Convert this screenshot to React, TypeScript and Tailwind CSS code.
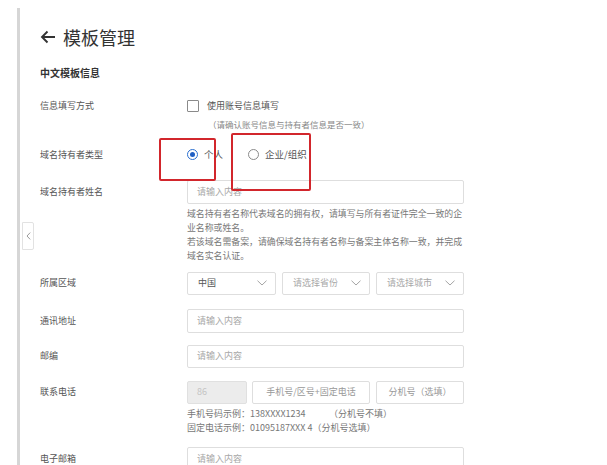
import React from "react";

function Chevron() {
  return (
    <svg width="10" height="6" viewBox="0 0 10 6" fill="none" className="shrink-0">
      <path d="M0.5 0.7 L5 5 L9.5 0.7" stroke="#9a9a9a" strokeWidth="0.9" />
    </svg>
  );
}

function Field({ placeholder, className = "" }: { placeholder: string; className?: string }) {
  return (
    <div className={`border border-[#dedede] rounded-[2px] flex items-center px-[9px] text-[9px] text-[#a8a8a8] ${className}`}>
      {placeholder}
    </div>
  );
}

function Select({ value, muted, className = "" }: { value: string; muted?: boolean; className?: string }) {
  return (
    <div className={`border border-[#dedede] rounded-[2px] flex items-center justify-between pl-[10px] pr-[8px] text-[9px] ${muted ? "text-[#a8a8a8]" : "text-[#555]"} ${className}`}>
      <span>{value}</span>
      <Chevron />
    </div>
  );
}

function Row({ label, children, className = "" }: { label: string; children: React.ReactNode; className?: string }) {
  return (
    <div className={`flex items-center ${className}`}>
      <div className="w-[147px] shrink-0 text-[9px] text-[#555]">{label}</div>
      {children}
    </div>
  );
}

export default function App() {
  return (
    <div
      className="relative w-[607px] h-[465px] overflow-hidden bg-white flex"
      style={{ fontFamily: '"Noto Sans CJK SC", "Noto Sans", sans-serif' }}
    >
      <div className="w-[17px] shrink-0" />
      <div className="w-[3px] shrink-0 mt-[8px] bg-[#d6d6d6]" />
      <div className="flex flex-col pl-[20px]">
        <div className="mt-[25px] h-[24px] flex items-center gap-[7px] text-[18px] leading-[24px] text-[#333]">
          <svg width="16" height="14" viewBox="0 0 16 14" fill="none">
            <path d="M15 7 H2 M7.5 1.5 L2 7 L7.5 12.5" stroke="#333" strokeWidth="1.9" />
          </svg>
          <span>模板管理</span>
        </div>

        <div className="mt-[17px] h-[14px] leading-[14px] text-[10px] font-bold text-[#333]">中文模板信息</div>

        <Row label="信息填写方式" className="mt-[19px] h-[14px]">
          <div className="flex items-center gap-[8px]">
            <div className="w-[12px] h-[12px] border border-[#8a8a8a] rounded-[1px] bg-white" />
            <span className="text-[9px] text-[#555]">使用账号信息填写</span>
          </div>
        </Row>
        <div className="mt-[5px] h-[12px] leading-[12px] pl-[168px] text-[8.5px] text-[#888]">
          （请确认账号信息与持有者信息是否一致）
        </div>

        <Row label="域名持有者类型" className="mt-[18px] h-[14px]">
          <div className="flex items-center text-[9.5px] text-[#555]">
            <div className="w-[11px] h-[11px] rounded-full border border-[#2b6fd0] flex items-center justify-center">
              <div className="w-[5px] h-[5px] rounded-full bg-[#1f5fc4]" />
            </div>
            <span className="ml-[6px]">个人</span>
            <div className="ml-[25px] w-[11px] h-[11px] rounded-full border border-[#8a8a8a]" />
            <span className="ml-[6px]">企业/组织</span>
          </div>
        </Row>

        <Row label="域名持有者姓名" className="mt-[18px]">
          <Field placeholder="请输入内容" className="w-[277px] h-[24px]" />
        </Row>
        <div className="mt-[3px] pl-[147px] w-[426px] text-[8.9px] leading-[14px] text-[#777]">
          <p>域名持有者名称代表域名的拥有权，请填写与所有者证件完全一致的企业名称或姓名。</p>
          <p>若该域名需备案，请确保域名持有者名称与备案主体名称一致，并完成域名实名认证。</p>
        </div>

        <Row label="所属区域" className="mt-[9px]">
          <div className="flex gap-[6px]">
            <Select value="中国" className="w-[89px] h-[23px]" />
            <Select value="请选择省份" muted className="w-[88px] h-[23px]" />
            <Select value="请选择城市" muted className="w-[88px] h-[23px]" />
          </div>
        </Row>

        <Row label="通讯地址" className="mt-[14px]">
          <Field placeholder="请输入内容" className="w-[277px] h-[24px]" />
        </Row>

        <Row label="邮编" className="mt-[12px]">
          <Field placeholder="请输入内容" className="w-[277px] h-[23px]" />
        </Row>

        <Row label="联系电话" className="mt-[13px]">
          <div className="flex">
            <div className="w-[60px] h-[23px] bg-[#ececec] border border-[#e0e0e0] rounded-[2px] flex items-center px-[9px] text-[9px] text-[#c4c4c4]">86</div>
            <div className="ml-[5px] w-[118px] h-[23px] border border-[#dedede] rounded-[2px] flex items-center justify-center text-[9px] text-[#999]">手机号/区号+固定电话</div>
            <div className="ml-[6px] w-[88px] h-[23px] border border-[#dedede] rounded-[2px] flex items-center justify-center text-[9px] text-[#999]">分机号（选填）</div>
          </div>
        </Row>
        <div className="mt-[3px] pl-[147px] text-[9px] leading-[14px] text-[#777] whitespace-pre">
          <p className="flex">
            <span className="w-[142px]">手机号码示例：138XXXX1234</span>
            <span>（分机号不填）</span>
          </p>
          <p>固定电话示例：01095187XXX 4（分机号选填）</p>
        </div>

        <Row label="电子邮箱" className="mt-[12px]">
          <Field placeholder="请输入内容" className="w-[277px] h-[24px]" />
        </Row>
      </div>

      <div className="absolute left-[22px] top-[222px] w-[12px] h-[28px] bg-white border border-[#e2e2e2] rounded-r-[2px] flex items-center justify-center">
        <svg width="5" height="8" viewBox="0 0 5 8" fill="none">
          <path d="M4.2 0.6 L1 4 L4.2 7.4" stroke="#9a9a9a" strokeWidth="1" />
        </svg>
      </div>

      <div className="absolute left-[159px] top-[138px] w-[57px] h-[43px] border-2 border-[#d2262c] rounded-[2px]" />
      <div className="absolute left-[231px] top-[133px] w-[80px] h-[58px] border-2 border-[#d2262c] rounded-[2px]" />
    </div>
  );
}
